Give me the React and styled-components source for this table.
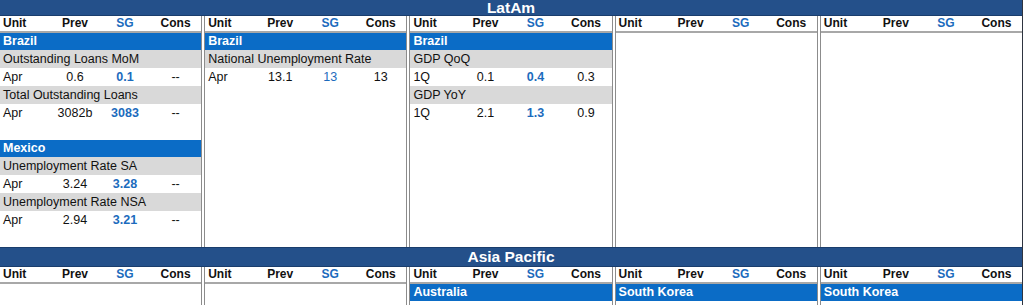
import React from 'react';
import styled, { createGlobalStyle } from 'styled-components';

const GlobalStyle = createGlobalStyle`
    body {
        margin: 0;
        background: #fff;
        font-family: "Liberation Sans", Arial, sans-serif;
        color: #111;
    }
`;

const Page = styled.div`
    width: 1022px;
    border-right: 2px solid #2e3440;
`;

const RegionBar = styled.div`
    height: ${props => props.height}px;
    line-height: ${props => props.height}px;
    background: #24508a;
    border-top: ${props => (props.first ? 'none' : '1px solid #1a3d6c')};
    border-bottom: 1px solid #1a3d6c;
    color: #fff;
    font-weight: bold;
    font-size: 15.5px;
    text-align: center;
    overflow: hidden;
`;

const PanelRow = styled.div`
    display: flex;
    gap: 2px;
    height: ${props => props.height}px;
`;

const Panel = styled.div`
    flex: 1;
    min-width: 0;
    border-left: 1px solid #8c8c8c;
    border-right: 1px solid #8c8c8c;

    &:first-child {
        border-left: none;
    }
    &:last-child {
        border-right: none;
    }
`;

const Cols = styled.div`
    display: grid;
    grid-template-columns: 50px 50px 50px 1fr;
    height: 18px;
    line-height: 19px;
    font-size: 12.5px;
`;

const HeadRow = styled(Cols)`
    height: 15px;
    line-height: 15px;
    font-size: 12px;
    font-weight: bold;
    border-bottom: 2px solid #a8a8a8;
`;

const Cell = styled.span`
    text-align: ${props => (props.left ? 'left' : 'center')};
    padding-left: ${props => (props.left ? '3px' : '0')};
    color: ${props => (props.blue ? '#1c6bbd' : 'inherit')};
    font-weight: ${props => (props.bold ? 'bold' : 'inherit')};
    white-space: nowrap;
`;

const Country = styled.div`
    height: 17px;
    line-height: 17px;
    padding-left: 3px;
    background: #0b6cc6;
    color: #fff;
    font-weight: bold;
    font-size: 12.5px;
`;

const SeriesName = styled.div`
    height: 18px;
    line-height: 19px;
    padding-left: 3px;
    background: #d9d9d9;
    font-size: 12.5px;
    white-space: nowrap;
`;

const Group = styled.div`
    & + & {
        margin-top: 18px;
    }
`;

const regions = [
    {
        title: 'LatAm',
        barHeight: 15,
        height: 231,
        panels: [
            [
                {
                    country: 'Brazil',
                    series: [
                        { name: 'Outstanding Loans MoM', unit: 'Apr', prev: '0.6', sg: '0.1', cons: '--' },
                        { name: 'Total Outstanding Loans', unit: 'Apr', prev: '3082b', sg: '3083', cons: '--' },
                    ],
                },
                {
                    country: 'Mexico',
                    series: [
                        { name: 'Unemployment Rate SA', unit: 'Apr', prev: '3.24', sg: '3.28', cons: '--' },
                        { name: 'Unemployment Rate NSA', unit: 'Apr', prev: '2.94', sg: '3.21', cons: '--' },
                    ],
                },
            ],
            [
                {
                    country: 'Brazil',
                    series: [
                        { name: 'National Unemployment Rate', unit: 'Apr', prev: '13.1', sg: '13', cons: '13', plain: true },
                    ],
                },
            ],
            [
                {
                    country: 'Brazil',
                    series: [
                        { name: 'GDP QoQ', unit: '1Q', prev: '0.1', sg: '0.4', cons: '0.3' },
                        { name: 'GDP YoY', unit: '1Q', prev: '2.1', sg: '1.3', cons: '0.9' },
                    ],
                },
            ],
            [],
            [],
        ],
    },
    {
        title: 'Asia Pacific',
        barHeight: 18,
        height: 60,
        panels: [
            [],
            [],
            [{ country: 'Australia', series: [] }],
            [{ country: 'South Korea', series: [] }],
            [{ country: 'South Korea', series: [] }],
        ],
    },
];

function Series({ item }) {
    return (
        <>
            <SeriesName>{item.name}</SeriesName>
            <Cols>
                <Cell left>{item.unit}</Cell>
                <Cell>{item.prev}</Cell>
                <Cell blue bold={!item.plain}>{item.sg}</Cell>
                <Cell>{item.cons}</Cell>
            </Cols>
        </>
    );
}

function Region({ region, first }) {
    return (
        <section>
            <RegionBar first={first} height={region.barHeight}>{region.title}</RegionBar>
            <PanelRow height={region.height}>
                {region.panels.map((groups, i) => (
                    <Panel key={i}>
                        <HeadRow>
                            <Cell left>Unit</Cell>
                            <Cell>Prev</Cell>
                            <Cell blue>SG</Cell>
                            <Cell>Cons</Cell>
                        </HeadRow>
                        {groups.map((g, j) => (
                            <Group key={j}>
                                <Country>{g.country}</Country>
                                {g.series.map((s, k) => (
                                    <Series key={k} item={s} />
                                ))}
                            </Group>
                        ))}
                    </Panel>
                ))}
            </PanelRow>
        </section>
    );
}

export default function App() {
    return (
        <Page>
            <GlobalStyle />
            {regions.map((r, i) => (
                <Region key={r.title} region={r} first={i === 0} />
            ))}
        </Page>
    );
}
